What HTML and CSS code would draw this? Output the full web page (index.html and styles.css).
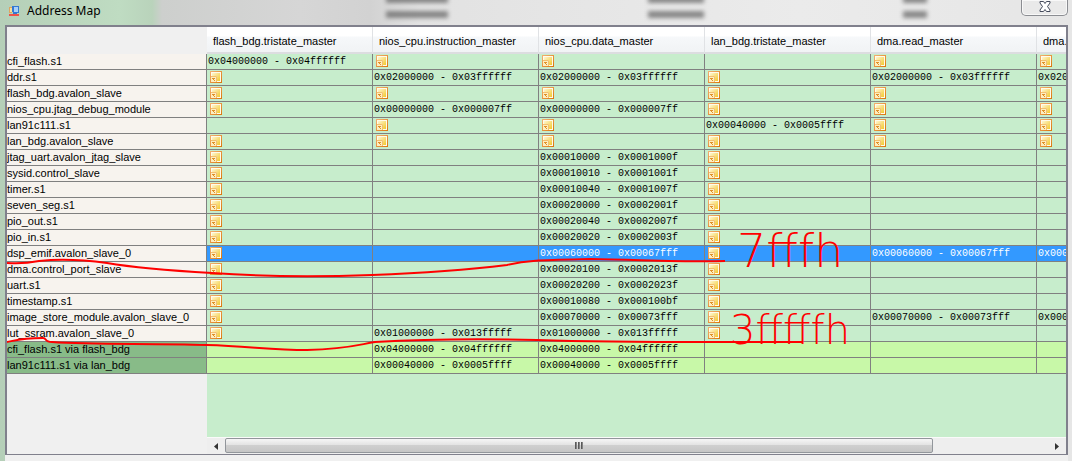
FILE: index.html
```html
<!DOCTYPE html>
<html lang="en">
<head>
<meta charset="utf-8">
<title>Address Map</title>
<link rel="stylesheet" href="styles.css">
</head>
<body>
<svg class="defs" aria-hidden="true">
  <defs>
    <linearGradient id="paper" x1="0" y1="0" x2="1" y2="1"><stop offset="0" stop-color="#fff6d0"/><stop offset="1" stop-color="#f2c92e"/></linearGradient>
    <linearGradient id="edge" x1="0" y1="0" x2="1" y2="1"><stop offset="0" stop-color="#f2b070"/><stop offset="1" stop-color="#dc7810"/></linearGradient>
    <symbol id="note" viewBox="0 0 12 12">
      <rect x=".5" y=".5" width="11" height="11" fill="#fffbea" stroke="url(#edge)"/>
      <rect x="2" y="2" width="8" height="8" fill="url(#paper)"/>
      <path d="M1 5H7V11H1Z" fill="#fdeec0"/>
      <path d="M1 5.500H6.500V11" fill="none" stroke="#f3c070"/>
      <path d="M2 7H5V8H4V9H5V10H4V9H3V8H2Z" fill="#e09028"/>
    </symbol>
  </defs>
</svg>
<div class="window">
  <div class="glass" aria-hidden="true"><i class="smudge s1"></i><i class="smudge s2"></i><i class="smudge s3"></i></div>
  <header class="titlebar">
    <svg class="app-icon" viewBox="0 0 12 12" aria-hidden="true">
      <path d="M0 2H3V8H0Z" fill="#dfa55e"/><path d="M1 3H3V7H1Z" fill="#f9df9a"/>
      <path d="M3 1H10V8H8V9H4V7H3Z" fill="#3479d2"/><path d="M5 2H9V7H5Z" fill="#a8d0fa"/>
      <path d="M0 9H10V11H0Z" fill="#ef5148"/>
    </svg>
    <h1>Address Map</h1>
    <button class="close" type="button" aria-label="Close">
      <svg viewBox="0 0 12 11" aria-hidden="true"><path d="M1 .5H4.500L6 2.500L7.500 .5H11V2L8.500 5.500L11 9V10.500H7.500L6 8.500L4.500 10.500H1V9L3.500 5.500L1 2Z" fill="#fff" stroke="#454b5c"/></svg>
    </button>
  </header>
  <main class="panel">
    <div class="viewport">
      <table>
        <colgroup><col class="name"><col><col><col><col><col><col></colgroup>
        <thead><tr>
          <td></td>
          <th scope="col">flash_bdg.tristate_master</th>
          <th scope="col">nios_cpu.instruction_master</th>
          <th scope="col">nios_cpu.data_master</th>
          <th scope="col">lan_bdg.tristate_master</th>
          <th scope="col">dma.read_master</th>
          <th scope="col">dma.write_master</th>
        </tr></thead>
        <tbody id="rows"></tbody>
      </table>
      <svg class="ink" viewBox="0 0 860 130" aria-hidden="true">
        <path d="M0 34C12 35 22 34 32 32C50 30 78 31 100 34C135 40 170 42 205 44C260 48 310 48 365 46C420 44 460 41 500 36C520 31 535 31 583 30C640 31 680 33 718 32"/>
        <path d="M0 113C10 111 16 109 36 109C40 109 37 113 45 113C90 116 140 114 200 116C240 117 265 121 300 121C340 120 350 116 368 113C420 110 490 110 530 111C620 114 680 113 796 113"/>
      </svg>
      <span class="remark first">7fffh</span>
      <span class="remark second">3fffffh</span>
    </div>
    <div class="footer">
      <div class="scrollbar">
        <button type="button" aria-label="Scroll left"><svg viewBox="0 0 4 7"><path d="M4 0V7L0 3.500Z"/></svg></button>
        <div class="track"><div class="thumb"><i></i><i></i><i></i></div></div>
        <button type="button" aria-label="Scroll right"><svg viewBox="0 0 4 7"><path d="M0 0V7L4 3.500Z"/></svg></button>
      </div>
    </div>
  </main>
</div>
<script src="rows.js"></script>
</body>
</html>
```

FILE: styles.css
```css
* { box-sizing: border-box; }
body { margin: 0; font: 11px/15px "Liberation Sans", Arial, sans-serif; color: #000; }
.defs { position: absolute; width: 0; height: 0; }
.window {
  position: relative;
  display: flex;
  flex-direction: column;
  height: 100vh;
  padding: 0 4px 0 5px;
  overflow: hidden;
  background: linear-gradient(90deg, #b5cfb8 0, #bfdcc2 120px, #b9d3bb 152px, #cdcfcd 162px, #d6d6d6 300px, #d2d2d2 370px, #e2e2e2 420px, #ebebeb 800px, #e6e6e6 100%);
}
.glass { position: absolute; inset: 0; }
.smudge { position: absolute; top: 11px; height: 7px; background: #555; box-shadow: 0 -15px #555; opacity: .65; filter: blur(2px); }
.s1 { left: 386px; width: 62px; }
.s2 { left: 648px; width: 56px; }
.s3 { left: 903px; width: 24px; }
.titlebar { position: relative; display: flex; align-items: center; height: 25px; padding: 0 0 4px 4px; flex: none; }
.app-icon { width: 12px; height: 12px; }
h1 { margin: 0 0 0 6px; font: 13px/20px "Noto Sans", "Open Sans", sans-serif; font-size: 12px; }
.close {
  align-self: flex-start;
  margin-left: auto;
  width: 47px;
  height: 16px;
  padding: 0;
  border: 1px solid #8b8d92;
  border-top: 0;
  border-radius: 0 0 5px 5px;
  background: #e9e9e9;
  box-shadow: inset 0 0 0 1px #f8f8f8;
}
.close svg { display: block; width: 12px; height: 11px; margin: 0 auto 3px; }
.panel {
  position: relative;
  display: flex;
  flex-direction: column;
  flex: 1;
  min-height: 0;
  margin-bottom: 6px;
  border: 1px solid #80808c;
  border-width: 2px 2px 1px;
  box-shadow: 0 7px #f0f0f0;
  background: #f0f0f0;
}
.viewport { position: relative; flex: 1; min-height: 0; overflow: hidden; background: linear-gradient(90deg, #f0f0f0 200px, #c7edcc 200px); }
table { width: 1196px; table-layout: fixed; border-collapse: separate; border-spacing: 0; }
col { width: 166px; }
col.name { width: 200px; }
th, td { padding: 0; text-align: left; font-weight: normal; white-space: nowrap; }
thead td { background: #f0f0f0; }
thead th {
  height: 27px;
  padding: 3px 0 0 6px;
  border-right: 1px solid #e0e2e5;
  border-bottom: 2px solid #dcdde0;
  background: linear-gradient(#fff 9px, #f6f8fa 10px, #f1f3f5);
}
tbody th, tbody td { height: 16px; border-right: 1px solid #808080; border-bottom: 1px solid #808080; overflow: hidden; vertical-align: top; }
tbody th { background: #f7f3ee; }
tbody td { padding-left: 1px; background: #c7edcc; font: 10px/15px "Liberation Mono", "Courier New", monospace; }
.selected td { background: #3399ff; color: #fff; }
.bridge th { background: #88bb88; }
.bridge td { background: #c8f8a8; }
td svg { display: block; width: 12px; height: 12px; margin: 1px 0 0 2px; }
.ink { position: absolute; left: 0; top: 202px; width: 860px; height: 130px; fill: none; stroke: #f00; stroke-width: 2; }
.remark { position: absolute; color: #f00; font: 200 40px/48px "DejaVu Sans", "DejaVu Sans Light", sans-serif; }
.first { left: 730px; top: 200px; font-size: 46px; }
.second { left: 723px; top: 279px; }
.footer { flex: none; padding-left: 200px; }
.scrollbar { display: flex; height: 17px; background: #eee; border-top: 1px solid #fafafa; }
.scrollbar button { display: grid; place-items: center; width: 18px; padding: 0; border: 0; background: none; }
.scrollbar svg { width: 4px; height: 7px; fill: #333; }
.track { flex: 1; }
.thumb {
  display: flex;
  justify-content: center;
  align-items: center;
  gap: 1px;
  width: 86%;
  height: 15px;
  border: 1px solid #92969b;
  border-radius: 2px;
  background: linear-gradient(#f6f6f6, #e3e3e3 45%, #cfcfcf 50%, #c5c5c5);
}
.thumb i { width: 2px; height: 7px; background: linear-gradient(90deg, #444, #999); }
```

FILE: rows.js
```js
// "*" marks a cell with a note icon, "" an empty one.
const rows = [
  ["cfi_flash.s1", "0x04000000 - 0x04ffffff", "*", "*", "", "*", "*"],
  ["ddr.s1", "*", "0x02000000 - 0x03ffffff", "0x02000000 - 0x03ffffff", "*", "0x02000000 - 0x03ffffff", "0x02000000 - 0x03ffffff"],
  ["flash_bdg.avalon_slave", "*", "*", "*", "*", "*", "*"],
  ["nios_cpu.jtag_debug_module", "*", "0x00000000 - 0x000007ff", "0x00000000 - 0x000007ff", "*", "*", "*"],
  ["lan91c111.s1", "", "*", "*", "0x00040000 - 0x0005ffff", "*", "*"],
  ["lan_bdg.avalon_slave", "*", "*", "*", "*", "*", "*"],
  ["jtag_uart.avalon_jtag_slave", "*", "", "0x00010000 - 0x0001000f", "*", "", ""],
  ["sysid.control_slave", "*", "", "0x00010010 - 0x0001001f", "*", "", ""],
  ["timer.s1", "*", "", "0x00010040 - 0x0001007f", "*", "", ""],
  ["seven_seg.s1", "*", "", "0x00020000 - 0x0002001f", "*", "", ""],
  ["pio_out.s1", "*", "", "0x00020040 - 0x0002007f", "*", "", ""],
  ["pio_in.s1", "*", "", "0x00020020 - 0x0002003f", "*", "", ""],
  ["dsp_emif.avalon_slave_0", "*", "", "0x00060000 - 0x00067fff", "*", "0x00060000 - 0x00067fff", "0x00060000 - 0x00067fff"],
  ["dma.control_port_slave", "*", "", "0x00020100 - 0x0002013f", "*", "", ""],
  ["uart.s1", "*", "", "0x00020200 - 0x0002023f", "*", "", ""],
  ["timestamp.s1", "*", "", "0x00010080 - 0x000100bf", "*", "", ""],
  ["image_store_module.avalon_slave_0", "*", "", "0x00070000 - 0x00073fff", "*", "0x00070000 - 0x00073fff", "0x00070000 - 0x00073fff"],
  ["lut_ssram.avalon_slave_0", "*", "0x01000000 - 0x013fffff", "0x01000000 - 0x013fffff", "*", "", ""],
  ["cfi_flash.s1 via flash_bdg", "", "0x04000000 - 0x04ffffff", "0x04000000 - 0x04ffffff", "", "", ""],
  ["lan91c111.s1 via lan_bdg", "", "0x00040000 - 0x0005ffff", "0x00040000 - 0x0005ffff", "", "", ""]
];
const icon = '<svg aria-hidden="true"><use href="#note"/></svg>';
document.getElementById("rows").innerHTML = rows.map(([name, ...cells]) => {
  const kind = name.startsWith("dsp_emif") ? "selected" : name.includes(" via ") ? "bridge" : "";
  const tds = cells.map(c => `<td>${c === "*" ? icon : c}</td>`).join("");
  return `<tr class="${kind}"><th scope="row">${name}</th>${tds}</tr>`;
}).join("");
```
